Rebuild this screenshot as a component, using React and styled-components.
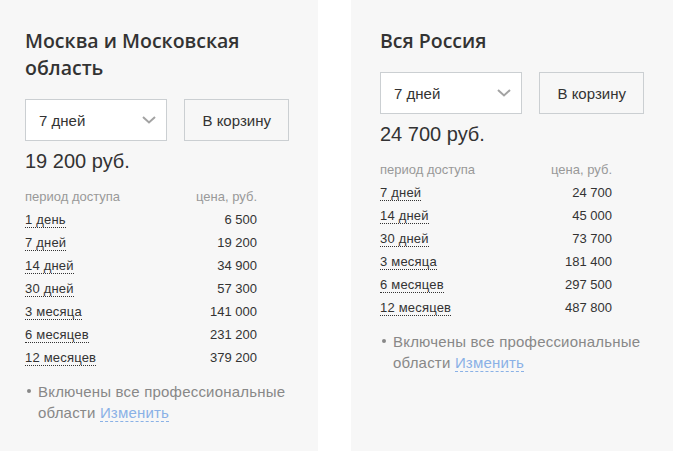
import React from 'react'
import styled, { createGlobalStyle } from 'styled-components'

const GlobalStyle = createGlobalStyle`
	html, body {
		margin: 0;
		padding: 0;
		background: #fff;
		overflow: hidden;
	}
	body {
		font-family: "Liberation Sans", Arial, sans-serif;
		color: #333;
	}
`

const Page = styled.div`
	display: flex;
	gap: 33px;
	margin-left: -4px;
	height: 451px;
`

const Card = styled.section`
	width: 322px;
	flex-shrink: 0;
	box-sizing: border-box;
	padding: 27px 29px 0;
	background: #f7f7f7;
`

const Title = styled.h2`
	margin: 0;
	font-family: "Open Sans", "Noto Sans", sans-serif;
	font-weight: 600;
	font-size: 19.5px;
	line-height: 27px;
	color: #333;
`

const Controls = styled.div`
	display: flex;
	gap: 17px;
	margin-top: 18px;
`

const SelectBox = styled.div`
	width: 144px;
	height: 42px;
	box-sizing: border-box;
	border: 1px solid #cbcfd2;
	background: #fff;
	display: flex;
	align-items: center;
	justify-content: space-between;
	padding: 0 10px 0 13px;
	font-size: 15px;
	color: #333;
`

const CartButton = styled.button`
	width: 106px;
	height: 42px;
	box-sizing: border-box;
	border: 1px solid #cbcfd2;
	background: #f7f7f7;
	font-family: "Liberation Sans", Arial, sans-serif;
	font-size: 15px;
	color: #333;
	padding: 0;
`

const Price = styled.div`
	margin-top: 8px;
	font-size: 20px;
	line-height: 24px;
	color: #333;
`

const PriceTable = styled.table`
	width: 232px;
	margin-top: 12px;
	border-collapse: collapse;
	font-size: 13px;

	th, td {
		padding: 0;
		height: 23px;
		line-height: 23px;
	}
	th {
		font-weight: 400;
		color: #999;
		text-align: left;
	}
	th:last-child, td:last-child {
		text-align: right;
	}
`

const Period = styled.span`
	border-bottom: 1px dotted #333;
	color: #333;
	letter-spacing: 0.2px;
`

const Note = styled.div`
	display: flex;
	gap: 7px;
	margin-top: 12px;
	font-size: 15px;
	line-height: 21px;
	letter-spacing: 0.2px;
	color: #888;
`

const Bullet = styled.span`
	flex-shrink: 0;
	width: 4px;
	height: 4px;
	margin: 8px 0 0 2px;
	border-radius: 50%;
	background: #888;
`

const ChangeLink = styled.a`
	color: #8ab1e6;
	text-decoration: none;
	border-bottom: 1px dashed #8ab1e6;
`

const Chevron = () => (
	<svg width="14" height="8" viewBox="0 0 14 8">
		<polyline points="1,1 7,6.5 13,1" fill="none" stroke="#a3a3a3" strokeWidth="2" />
	</svg>
)

const regions = [
	{
		title: ['Москва и Московская', 'область'],
		price: '19 200 руб.',
		rows: [
			['1 день', '6 500'],
			['7 дней', '19 200'],
			['14 дней', '34 900'],
			['30 дней', '57 300'],
			['3 месяца', '141 000'],
			['6 месяцев', '231 200'],
			['12 месяцев', '379 200'],
		],
	},
	{
		title: ['Вся Россия'],
		price: '24 700 руб.',
		rows: [
			['7 дней', '24 700'],
			['14 дней', '45 000'],
			['30 дней', '73 700'],
			['3 месяца', '181 400'],
			['6 месяцев', '297 500'],
			['12 месяцев', '487 800'],
		],
	},
]

const RegionCard = ({ title, price, rows }) => (
	<Card>
		<Title>
			{title.map((line, i) => (
				<React.Fragment key={i}>
					{i > 0 && <br />}
					{line}
				</React.Fragment>
			))}
		</Title>
		<Controls>
			<SelectBox>
				<span>7 дней</span>
				<Chevron />
			</SelectBox>
			<CartButton>В корзину</CartButton>
		</Controls>
		<Price>{price}</Price>
		<PriceTable>
			<thead>
				<tr>
					<th>период доступа</th>
					<th>цена, руб.</th>
				</tr>
			</thead>
			<tbody>
				{rows.map(([period, cost]) => (
					<tr key={period}>
						<td><Period>{period}</Period></td>
						<td>{cost}</td>
					</tr>
				))}
			</tbody>
		</PriceTable>
		<Note>
			<Bullet />
			<span>
				Включены все профессиональные области <ChangeLink href="#">Изменить</ChangeLink>
			</span>
		</Note>
	</Card>
)

const App = () => (
	<>
		<GlobalStyle />
		<Page>
			{regions.map((r) => (
				<RegionCard key={r.price} {...r} />
			))}
		</Page>
	</>
)

export default App
